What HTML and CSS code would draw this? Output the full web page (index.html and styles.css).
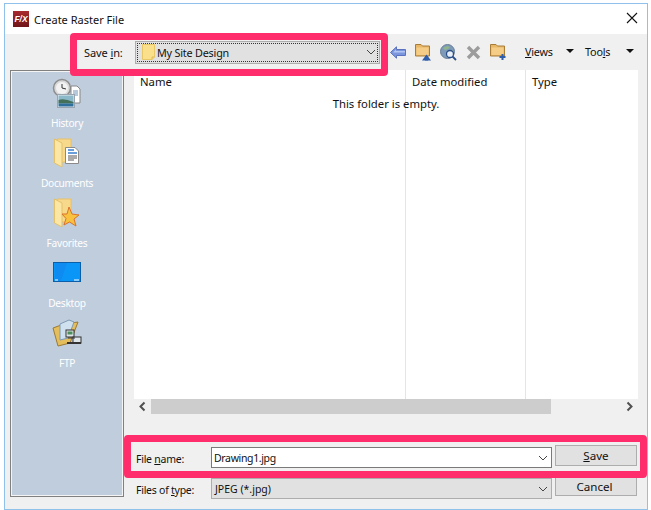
FILE: index.html
```html
<!DOCTYPE html>
<html lang="en">
    <head>
        <meta charset="UTF-8">
        <title>Create Raster File</title>
        <link rel="stylesheet" href="styles.css">
    </head>
    <body>
        <div class="window">
            <div class="titlebar">
                <span class="app-logo">F/X</span>
                <span class="title">Create Raster File</span>
                <svg class="close" width="12" height="12" viewBox="0 0 12 12"><path d="M1 1L11 11M11 1L1 11" stroke="#111" stroke-width="1.1" fill="none"/></svg>
            </div>
            <div class="client">
                <div class="toolbar">
                    <span class="save-label">Save <u>i</u>n:</span>
                    <div class="combo save-combo">
                        <div class="focus-line">
                            <svg class="combo-folder" width="13" height="16" viewBox="0 0 13 16"><path d="M.5 .5H12.500V13L10 15.500H.5Z" fill="#fbe08c" stroke="#e8c766"/><path d="M10 15.500V13H12.500" fill="#f5d477" stroke="#e0bb58"/></svg>
                            <span>My Site Design</span>
                            <svg class="chevron" width="10" height="6" viewBox="0 0 10 6"><path d="M1 1L5 5L9 1" stroke="#444" fill="none"/></svg>
                        </div>
                    </div>
                    <div class="tool-icons">
                        <svg width="16" height="13" viewBox="0 0 16 13"><path d="M.5 6.500L6.500 .8V3.500H15.500V9.500H6.500V12.200Z" fill="#7b96dd" stroke="#5a72c0"/><path d="M3 6.500L6 3.500V5H15V6.500Z" fill="#b3c5f2"/></svg>
                        <svg width="16" height="17" viewBox="0 0 16 17"><path d="M.5 .5H6L7.500 2H14.500V12H.5Z" fill="#e8b768" stroke="#a87d38"/><path d="M1.500 3.500H13.500V11H1.500Z" fill="#f5cd86"/><path d="M7 16.500L11.500 10.500L16 16.500Z" fill="#2f5da8"/><path d="M10 16.500H13V12H10Z" fill="#2f5da8"/></svg>
                        <svg width="17" height="17" viewBox="0 0 17 17"><circle cx="7.500" cy="7.500" r="7" fill="#7d9bb8" stroke="#6a7f98"/><path d="M3 4Q7 1 10 3L8 5L5 6ZM9 8L13 6L13 10L10 11Z" fill="#8fb58a"/><circle cx="10" cy="10" r="3.500" fill="#e9eff6" stroke="#2a4f8a" stroke-width="1.300"/><path d="M12.500 12.500L16 16" stroke="#2a4f8a" stroke-width="1.800"/></svg>
                        <svg width="15" height="15" viewBox="0 0 15 15"><path d="M2 2L13 13M13 2L2 13" stroke="#9c9c9c" stroke-width="3.400"/></svg>
                        <svg width="16" height="17" viewBox="0 0 16 17"><path d="M.5 .5H6L7.500 2H14.500V12H.5Z" fill="#e8b768" stroke="#a87d38"/><path d="M1.500 3.500H13.500V11H1.500Z" fill="#f5cd86"/><path d="M12.500 10V16M9.500 13H15.500" stroke="#2f5da8" stroke-width="2"/></svg>
                    </div>
                    <span class="tool-menu views"><u>V</u>iews</span>
                    <span class="caret"></span>
                    <span class="tool-menu tools">Too<u>l</u>s</span>
                    <span class="caret"></span>
                </div>
                <div class="main">
                    <div class="places">
                        <div class="place">
                            <svg width="30" height="30" viewBox="0 0 30 30"><circle cx="10" cy="10" r="8.500" fill="#d9d9d9" stroke="#8d8d8d" stroke-width="1.500"/><circle cx="10" cy="10" r="6" fill="#f2f2f2"/><path d="M10 6V10L14 11" stroke="#333" fill="none"/><path d="M19 8H25L28 11V25H19Z" fill="#fff" stroke="#888"/><path d="M21 13H26M21 15H26M21 17H26" stroke="#6f94b8"/><rect x="5.500" y="16.500" width="17" height="13" fill="#e8eef3" stroke="#98a5b0"/><rect x="6.500" y="17.500" width="15" height="8" fill="#8cb9c9"/><path d="M6.500 25.500V22Q12 20 21.500 24V25.500Z" fill="#44705a"/><rect x="6.500" y="25.500" width="15" height="3" fill="#2f6f9c"/></svg>
                            <span>History</span>
                        </div>
                        <div class="place">
                            <svg width="26" height="30" viewBox="0 0 26 30"><path d="M3 1H17V24H3Z" fill="#f7d98c" stroke="#e8c06a"/><path d="M.5 1L8 5V29L.5 25Z" fill="#fbe6a3" stroke="#e3c06a"/><path d="M11.500 9.500H21L24.500 13V25.500H11.500Z" fill="#fff" stroke="#8a8a8a"/><path d="M14 12H20M14 15H23" stroke="#3a7fd0" stroke-width="1.300"/><path d="M14 18H23M14 20H23M14 22H20" stroke="#555"/></svg>
                            <span>Documents</span>
                        </div>
                        <div class="place">
                            <svg width="26" height="30" viewBox="0 0 26 30"><path d="M3 1H17V24H3Z" fill="#f7d98c" stroke="#e8c06a"/><path d="M.5 1L8 5V29L.5 25Z" fill="#fbe6a3" stroke="#e3c06a"/><path d="M15 9L18 16L25 17L20 21L22 28L15.500 24L10 27L12 20.500L8 16L13 16Z" fill="#f8c23e" stroke="#d9742a"/></svg>
                            <span>Favorites</span>
                        </div>
                        <div class="place">
                            <svg width="28" height="30" viewBox="0 0 28 30"><rect x=".5" y="4.500" width="27" height="19" fill="#0a96f6" stroke="#0a5fa8"/><path d="M14 5L8 23H2V5Z" fill="#0d8bf0"/><path d="M2 22H5M21 22H26" stroke="#fff"/></svg>
                            <span>Desktop</span>
                        </div>
                        <div class="place">
                            <svg width="30" height="30" viewBox="0 0 30 30"><path d="M1 10L12 6L26 4L18 25L6 28Z" fill="#e4bd5c" stroke="#9c7a33"/><path d="M8 6L17 2L22 4L16 20L8 22Z" fill="#cfe1ef" stroke="#7e9ab3"/><rect x="14" y="12" width="8" height="7" fill="#dfe6ea" stroke="#333"/><rect x="15.500" y="13.500" width="5" height="3" fill="#4d8d5a"/><rect x="21" y="19" width="8" height="6" fill="#dfe6ea" stroke="#333"/><path d="M15 25H29" stroke="#333" stroke-width="2"/><path d="M16 20H23" stroke="#333"/></svg>
                            <span>FTP</span>
                        </div>
                    </div>
                    <div class="content">
                        <div class="list">
                            <div class="columns">
                                <div class="col col-name">Name</div>
                                <div class="col col-date">Date modified</div>
                                <div class="col col-type">Type</div>
                            </div>
                            <p class="empty">This folder is empty.</p>
                        </div>
                        <div class="scrollbar">
                            <svg class="scroll-arrow" width="17" height="15" viewBox="0 0 17 15"><path d="M10.500 3.500L6.500 7.500L10.500 11.500" stroke="#505050" stroke-width="2" fill="none"/></svg>
                            <div class="thumb"></div>
                            <div class="track"></div>
                            <svg class="scroll-arrow" width="17" height="15" viewBox="0 0 17 15"><path d="M6.500 3.500L10.500 7.500L6.500 11.500" stroke="#505050" stroke-width="2" fill="none"/></svg>
                        </div>
                        <div class="file-form">
                            <div class="fields">
                                <div class="field">
                                    <label>File <u>n</u>ame:</label>
                                    <div class="name-input">
                                        <span>Drawing1.jpg</span>
                                        <svg class="chevron" width="10" height="6" viewBox="0 0 10 6"><path d="M1 1L5 5L9 1" stroke="#444" fill="none"/></svg>
                                    </div>
                                </div>
                                <div class="field">
                                    <label>Files of <u>t</u>ype:</label>
                                    <div class="type-combo">
                                        <span>JPEG (*.jpg)</span>
                                        <svg class="chevron" width="10" height="6" viewBox="0 0 10 6"><path d="M1 1L5 5L9 1" stroke="#444" fill="none"/></svg>
                                    </div>
                                </div>
                            </div>
                            <div class="buttons">
                                <button class="btn btn-save"><u>S</u>ave</button>
                                <button class="btn btn-cancel">Cancel</button>
                            </div>
                        </div>
                    </div>
                </div>
            </div>
            <div class="callout callout-top"></div>
            <div class="callout callout-bottom"></div>
        </div>
    </body>
</html>
```

FILE: styles.css
```css
* {
    box-sizing: border-box;
    margin: 0;
}

body {
    background-color: #fff;
    font-family: "Noto Sans", sans-serif;
    font-size: 11.3px;
    color: #111;
}

.window {
    position: relative;
    width: 644px;
    height: 507px;
    margin: 3px 0 0 4px;
    border: 1px solid #8fc1ea;
    display: flex;
    flex-direction: column;
    background-color: #f0f0f0;
}

.titlebar {
    height: 30px;
    flex-shrink: 0;
    display: flex;
    align-items: center;
    padding: 0 9px 0 8px;
    background-color: #fff;
}

.app-logo {
    width: 16px;
    height: 16px;
    background: linear-gradient(#a82a30, #6f1519);
    color: #fff;
    font-family: "Liberation Sans", sans-serif;
    font-size: 8.5px;
    font-weight: bold;
    font-style: italic;
    line-height: 16px;
    text-align: center;
}

.title {
    margin-left: 5px;
    flex: 1;
    font-size: 11px;
}

.close {
    margin-bottom: 2px;
}

.client {
    flex: 1;
    display: flex;
    flex-direction: column;
}

.toolbar {
    height: 36px;
    flex-shrink: 0;
    display: flex;
    align-items: center;
    padding-left: 79px;
}

.save-label {
    width: 51px;
    font-size: 11px;
    letter-spacing: -.1px;
}

.combo {
    width: 245px;
    height: 23px;
    padding: 1px;
    background-color: #e1e1e1;
    border: 1px solid #adadad;
}

.focus-line {
    height: 100%;
    display: flex;
    align-items: center;
    padding: 0 1px 0 4px;
    border: 1px dotted #333;
    font-size: 10.8px;
    letter-spacing: -.2px;
}

.combo-folder {
    margin-right: 2px;
}

.chevron {
    margin-left: auto;
}

.tool-icons {
    display: flex;
    align-items: center;
    gap: 9px;
    margin-left: 10px;
    width: 135px;
}

.tool-menu {
    width: 41px;
    margin-bottom: 2px;
    font-size: 10.8px;
    letter-spacing: -.2px;
}

.caret {
    width: 0;
    height: 0;
    border-left: 4px solid transparent;
    border-right: 4px solid transparent;
    border-top: 4px solid #111;
    margin-right: 11px;
    margin-bottom: 3px;
}

.main {
    flex: 1;
    display: flex;
    padding-left: 5px;
}

.places {
    width: 114px;
    height: 427px;
    flex-shrink: 0;
    background-color: #bfcddd;
    border: 1px solid #808080;
    box-shadow: inset 0 0 0 1px #f4f4f4;
    padding-top: 7px;
}

.place {
    height: 60px;
    display: flex;
    flex-direction: column;
    align-items: center;
    color: #fff;
    font-size: 10.2px;
    letter-spacing: -.3px;
}

.place svg {
    flex-shrink: 0;
}

.place span {
    margin-top: 8px;
}

.content {
    width: 504px;
    margin-left: 10px;
    display: flex;
    flex-direction: column;
}

.list {
    height: 329px;
    background-color: #fff;
    position: relative;
    flex-shrink: 0;
}

.columns {
    display: flex;
    height: 329px;
}

.col {
    padding: 4px 0 0 6px;
    border-right: 1px solid #e5e5e5;
}

.col-name {
    width: 272px;
}

.col-date {
    width: 120px;
}

.col-type {
    flex: 1;
    border-right: 0;
}

.empty {
    position: absolute;
    top: 26px;
    left: 0;
    width: 100%;
    text-align: center;
}

.scrollbar {
    height: 15px;
    display: flex;
    flex-shrink: 0;
}

.thumb {
    width: 400px;
    background-color: #cdcdcd;
}

.track {
    flex: 1;
}

.file-form {
    display: flex;
}

.fields {
    margin-top: 33px;
    display: flex;
    flex-direction: column;
    gap: 10px;
}

.field {
    display: flex;
    height: 21px;
}

.field label {
    width: 77px;
    padding: 5px 0 0 2px;
    font-size: 10.5px;
    letter-spacing: -.25px;
}

.name-input, .type-combo {
    width: 341px;
    height: 21px;
    display: flex;
    align-items: center;
    padding: 0 3px 0 2px;
    font-size: 10.5px;
    letter-spacing: -.35px;
}

.name-input {
    background-color: #fff;
    border: 1px solid #7a7a7a;
}

.type-combo {
    padding-left: 3px;
    letter-spacing: 0;
    background-color: #e1e1e1;
    border: 1px solid #adadad;
}

.buttons {
    margin-top: 31px;
    margin-left: 3px;
    display: flex;
    flex-direction: column;
    gap: 10px;
}

.btn {
    width: 82px;
    height: 21px;
    background-color: #e1e1e1;
    border: 1px solid #adadad;
    font-family: inherit;
    font-size: 11.6px;
    color: #111;
    padding: 0;
}

.btn-cancel {
    height: 20px;
    padding-right: 3px;
}

/* pink annotation boxes drawn on top of the dialog */
.callout {
    position: absolute;
    border: 7px solid #ff2d6b;
    border-radius: 4px;
}

.callout-top {
    left: 65px;
    top: 29px;
    width: 318px;
    height: 43px;
}

.callout-bottom {
    left: 119px;
    top: 431px;
    width: 523px;
    height: 43px;
}
```
